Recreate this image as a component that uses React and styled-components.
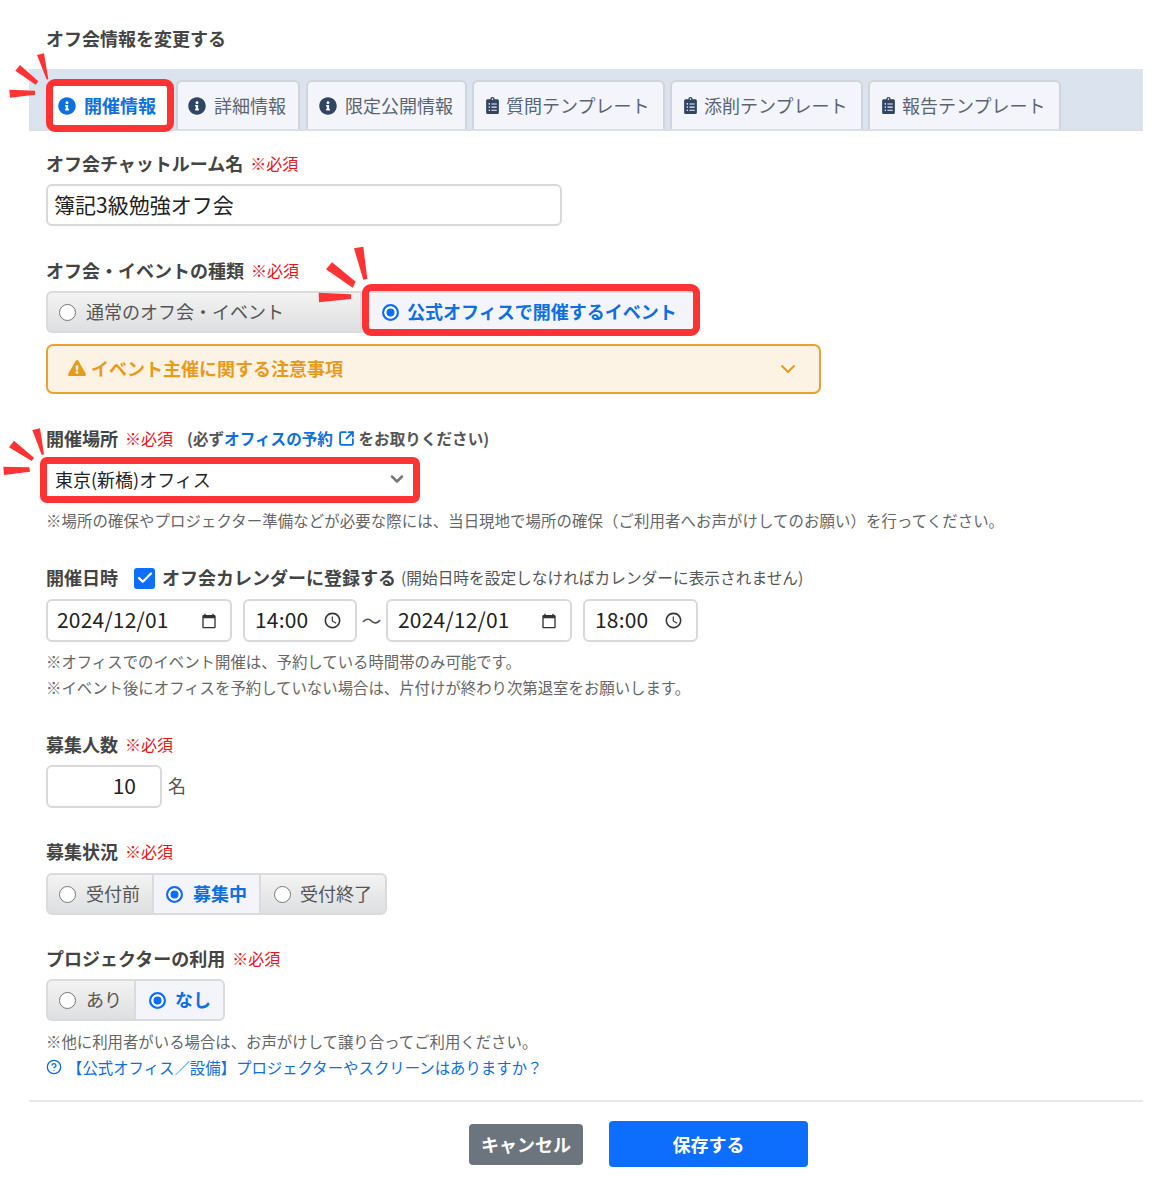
import React from "react";
import styled, { createGlobalStyle } from "styled-components";
import { FaInfoCircle, FaClipboardList, FaExclamationTriangle } from "react-icons/fa";
import { ChevronDown, CircleHelp, SquareArrowOutUpRight, Check } from "lucide-react";
import { MdCalendarToday, MdOutlineAccessTime } from "react-icons/md";

const Global = createGlobalStyle`
  html, body { margin: 0; padding: 0; background: #fff; }
  body { font-family: "Noto Sans CJK JP", "Noto Sans", sans-serif; color: #3a3a3a; }
`;

const Page = styled.div`
  width: 1170px;
  height: 1197px;
  padding: 28px 27px 0 29px;
  box-sizing: border-box;
  overflow: hidden;
`;
const Title = styled.h1`
  margin: 0 0 20px 17px;
  font-size: 18px;
  line-height: 21px;
  font-weight: 700;
  color: #444;
`;
const TabBar = styled.div`
  display: flex;
  align-items: flex-end;
  height: 62px;
  padding-left: 17px;
  background: #dae3ee;
  border-bottom: 2px solid #dcdfe3;
  box-sizing: border-box;
`;
const Tab = styled.div`
  position: relative;
  display: flex;
  align-items: center;
  gap: ${(p) => (p.$list ? "5px" : "8px")};
  width: ${(p) => p.$w}px;
  margin-right: ${(p) => p.$mr}px;
  height: 49px;
  box-sizing: border-box;
  padding: 0 0 2px ${(p) => p.$pl}px;
  background: ${(p) => (p.$active ? "#fff" : "#f3f5fa")};
  border: 2px solid #d0d5dc;
  border-bottom: none;
  border-radius: 6px 6px 0 0;
  font-size: 18px;
  font-weight: ${(p) => (p.$active ? 700 : 400)};
  color: ${(p) => (p.$active ? "#0d6fe0" : "#5a6472")};
  white-space: nowrap;
`;
const TabIcon = styled.span`
  display: flex;
  flex: none;
  margin-top: 2px;
  color: ${(p) => (p.$active ? "#0d6fe0" : "#2f4563")};
`;
const Mark = styled.div`
  position: absolute;
  inset: ${(p) => p.$inset};
  border: 7px solid #ff3333;
  border-radius: ${(p) => p.$r || 9}px;
  pointer-events: none;
  z-index: 2;
`;
const BurstSvg = styled.svg`
  position: absolute;
  left: ${(p) => p.$x}px;
  top: ${(p) => p.$y}px;
  z-index: 3;
  pointer-events: none;
`;
const Form = styled.div`
  padding-left: 17px;
`;
const Field = styled.section`
  position: relative;
  margin-top: ${(p) => p.$mt ?? 34}px;
`;
const Label = styled.div`
  display: flex;
  align-items: center;
  height: 20px;
  box-sizing: border-box;
  padding-bottom: 2px;
  margin-bottom: ${(p) => p.$mb ?? 10}px;
  font-size: 18px;
  font-weight: 700;
  color: #444;
  white-space: nowrap;
`;
const Req = styled.span`
  margin-left: 7px;
  font-size: 16px;
  font-weight: 400;
  color: #e8161b;
`;
const Hint = styled.span`
  margin-left: 14px;
  font-size: 15.6px;
  font-weight: 700;
  color: #555;
  display: inline-flex;
  align-items: center;
`;
const Link = styled.span`
  color: #0d6fe0;
  display: inline-flex;
  align-items: center;
  gap: 5px;
`;
const TextBox = styled.input`
  display: block;
  width: ${(p) => p.$w}px;
  height: ${(p) => p.$h || 42}px;
  box-sizing: border-box;
  padding: 0 ${(p) => p.$pr || 6}px ${(p) => p.$pb || 2}px 6px;
  border: 2px solid #d9d9d9;
  border-radius: 6px;
  background: #fff;
  font: 400 21px "Noto Sans CJK JP", sans-serif;
  color: #222;
  text-align: ${(p) => p.$align || "left"};
  outline: none;
`;
const Seg = styled.div`
  position: relative;
  display: inline-flex;
  height: 42px;
  vertical-align: top;
`;
const SegItem = styled.div`
  position: relative;
  display: flex;
  align-items: center;
  gap: ${(p) => p.$gap || 10}px;
  width: ${(p) => p.$w}px;
  box-sizing: border-box;
  padding: 0 0 2px ${(p) => p.$pl || 11}px;
  border: 2px solid #d9dbdd;
  border-left-width: ${(p) => (p.$first ? 2 : 0)}px;
  border-radius: ${(p) => (p.$first ? "6px 0 0 6px" : p.$last ? "0 6px 6px 0" : "0")};
  background: ${(p) => (p.$on ? "#f3f5fb" : "linear-gradient(#f3f3f3, #dedfe0)")};
  color: ${(p) => (p.$on ? "#0d6fe0" : "#555")};
  font-size: 18px;
  font-weight: ${(p) => (p.$on ? 700 : 400)};
  white-space: nowrap;
`;
const Radio = styled.span`
  flex: none;
  width: 17px;
  height: 17px;
  margin-top: 2px;
  border-radius: 50%;
  box-sizing: border-box;
  background: ${(p) => (p.$on ? "#0d6efd" : "#fff")};
  border: ${(p) => (p.$on ? "2px solid #0d6efd" : "1.5px solid #777")};
  box-shadow: ${(p) => (p.$on ? "inset 0 0 0 2.5px #fff" : "none")};
`;
const Warn = styled.div`
  display: flex;
  align-items: center;
  gap: 5px;
  width: 775px;
  height: 50px;
  margin-top: 11px;
  box-sizing: border-box;
  padding: 0 19px 2px 20px;
  border: 2px solid #eba02f;
  border-radius: 7px;
  background: #fdf3e4;
  color: #e99a1c;
  font-size: 18px;
  font-weight: 700;
`;
const WarnChevron = styled(ChevronDown)`
  margin-left: auto;
  margin-top: 2px;
`;
const SelectWrap = styled.div`
  position: relative;
  display: flex;
  align-items: center;
  width: 367px;
  height: 42px;
  margin-left: 1px;
  box-sizing: border-box;
  padding: 0 7px 2px 8px;
  background: #fff;
  font-size: 18px;
  color: #222;
`;
const SelectChevron = styled(ChevronDown)`
  margin-left: auto;
  color: #777;
`;
const Note = styled.p`
  margin: ${(p) => p.$mt ?? 0}px 0 0;
  font-size: 15.4px;
  line-height: 26px;
  letter-spacing: ${(p) => p.$ls || 0}px;
  color: #666;
  white-space: nowrap;
`;
const NoteLink = styled(Note)`
  color: #0d6fe0;
  display: flex;
  align-items: center;
  gap: 5px;
`;
const CheckBox = styled.span`
  display: inline-flex;
  align-items: center;
  justify-content: center;
  width: 21px;
  height: 21px;
  margin: 2px 7px 0 16px;
  border-radius: 3px;
  background: #0d6efd;
  color: #fff;
`;
const Small = styled.span`
  margin-left: 5px;
  font-size: 15.7px;
  font-weight: 400;
  color: #555;
`;
const DateRow = styled.div`
  display: flex;
  align-items: center;
  height: 43px;
  margin-top: 11px;
`;
const Picker = styled.div`
  display: flex;
  align-items: center;
  justify-content: space-between;
  width: ${(p) => p.$w}px;
  height: 43px;
  margin-right: ${(p) => p.$mr || 0}px;
  box-sizing: border-box;
  padding: 0 13px 4px ${(p) => p.$pl || 10}px;
  border: 2px solid #d9d9d9;
  border-radius: 6px;
  font-size: 21px;
  letter-spacing: 0.2px;
  color: #222;
  svg { color: #333; flex: none; margin-top: 4px; }
`;
const Tilde = styled.span`
  width: 29px;
  text-align: center;
  font-size: 20px;
  color: #555;
`;
const UnitRow = styled.div`
  display: flex;
  align-items: center;
  gap: 6px;
  font-size: 18px;
  line-height: 20px;
  color: #555;
  span { margin-top: -4px; }
`;
const Divider = styled.hr`
  margin: 20px 0 0;
  border: none;
  border-top: 2px solid #e6eaf0;
`;
const Actions = styled.div`
  display: flex;
  align-items: center;
  gap: 26px;
  margin-top: 19px;
  padding-left: 440px;
`;
const Cancel = styled.button`
  width: 114px;
  height: 41px;
  padding: 0;
  border: none;
  border-radius: 4px;
  background: #6c757d;
  color: #fff;
  font: 700 18px "Noto Sans CJK JP", sans-serif;
`;
const Save = styled.button`
  width: 199px;
  height: 46px;
  padding: 0;
  border: none;
  border-radius: 4px;
  background: #0d6efd;
  color: #fff;
  font: 700 18px "Noto Sans CJK JP", sans-serif;
`;

const Burst = ({ x, y, w = 50, h = 50, points }) => (
  <BurstSvg $x={x} $y={y} width={w} height={h} viewBox={`0 0 ${w} ${h}`}>
    {points.map((pt) => (
      <polygon key={pt} points={pt} fill="#ff3333" />
    ))}
  </BurstSvg>
);

const tabs = [
  { t: "開催情報", w: 128, mr: 2, pl: 10, active: true },
  { t: "詳細情報", w: 124, mr: 6, pl: 10 },
  { t: "限定公開情報", w: 161, mr: 5, pl: 11 },
  { t: "質問テンプレート", w: 193, mr: 5, pl: 10, list: true },
  { t: "添削テンプレート", w: 193, mr: 5, pl: 10, list: true },
  { t: "報告テンプレート", w: 193, mr: 0, pl: 10, list: true },
];

const Required = () => <Req>※必須</Req>;

export default function App() {
  return (
    <Page>
      <Global />
      <Title>オフ会情報を変更する</Title>
      <TabBar>
        {tabs.map((tab) => (
          <Tab key={tab.t} $w={tab.w} $mr={tab.mr} $pl={tab.pl} $active={tab.active} $list={tab.list}>
            <TabIcon $active={tab.active}>
              {tab.list ? <FaClipboardList size={17} /> : <FaInfoCircle size={18} />}
            </TabIcon>
            {tab.t}
            {tab.active && <Mark $inset="-3px -2px -3px -2px" />}
            {tab.active && (
              <Burst
                x={-48}
                y={-33}
                points={[
                  "37,6 44,4.3 48.3,30 46.7,30.7",
                  "15.3,21.7 20,16 38.3,32.3 35.7,35.7",
                  "9.3,40.7 35,41.7 35,45.7 10,48.7",
                ]}
              />
            )}
          </Tab>
        ))}
      </TabBar>
      <Form>
        <Field $mt={23}>
          <Label>
            オフ会チャットルーム名
            <Required />
          </Label>
          <TextBox readOnly value="簿記3級勉強オフ会" $w={516} />
        </Field>
        <Field $mt={35}>
          <Label>
            オフ会・イベントの種類
            <Required />
          </Label>
          <Seg>
            <SegItem $first $w={316}>
              <Radio />
              通常のオフ会・イベント
            </SegItem>
            <SegItem $on $last $w={336} $pl={20} $gap={8}>
              <Radio $on />
              公式オフィスで開催するイベント
              <Mark $inset="-9px -4px -5px 0" />
              <Burst
                x={-52}
                y={-48}
                w={60}
                h={60}
                points={[
                  "44,3.3 53.3,1.7 57.3,34 53.3,34.7",
                  "16,24.3 22,17.3 45.7,36.7 42.7,42.7",
                  "8.7,47.7 41,49.3 41,54 9,57.3",
                ]}
              />
            </SegItem>
          </Seg>
          <Warn>
            <FaExclamationTriangle size={18} />
            イベント主催に関する注意事項
            <WarnChevron size={24} strokeWidth={2} />
          </Warn>
        </Field>
        <Field $mt={35}>
          <Label>
            開催場所
            <Required />
            <Hint>
              (必ず
              <Link>
                オフィスの予約
                <SquareArrowOutUpRight size={17} strokeWidth={2.6} />
              </Link>
              &nbsp;をお取りください)
            </Hint>
          </Label>
          <SelectWrap>
            東京(新橋)オフィス
            <SelectChevron size={20} strokeWidth={3} />
            <Mark $inset="-2px -6px -2px -7px" $r={7} />
          </SelectWrap>
          <Burst
            x={-46}
            y={-4}
            points={[
              "32.3,5 40,3.3 44,29.3 41.7,30",
              "9,22.3 14,15.7 34,32.7 31.7,36",
              "3.3,41.7 29.3,42.3 30,46.7 4,50",
            ]}
          />
          <Note $mt={6} $ls={0.1}>
            ※場所の確保やプロジェクター準備などが必要な際には、当日現地で場所の確保（ご利用者へお声がけしてのお願い）を行ってください。
          </Note>
        </Field>
        <Field $mt={35}>
          <Label $mb={0}>
            開催日時
            <CheckBox>
              <Check size={18} strokeWidth={3} />
            </CheckBox>
            オフ会カレンダーに登録する
            <Small>(開始日時を設定しなければカレンダーに表示されません)</Small>
          </Label>
          <DateRow>
            <Picker $w={186} $mr={11} $pl={9}>
              2024/12/01
              <MdCalendarToday size={16} />
            </Picker>
            <Picker $w={114}>
              14:00
              <MdOutlineAccessTime size={19} />
            </Picker>
            <Tilde>〜</Tilde>
            <Picker $w={186} $mr={11}>
              2024/12/01
              <MdCalendarToday size={16} />
            </Picker>
            <Picker $w={115}>
              18:00
              <MdOutlineAccessTime size={19} />
            </Picker>
          </DateRow>
          <Note $mt={6}>※オフィスでのイベント開催は、予約している時間帯のみ可能です。</Note>
          <Note>※イベント後にオフィスを予約していない場合は、片付けが終わり次第退室をお願いします。</Note>
        </Field>
        <Field $mt={35}>
          <Label>
            募集人数
            <Required />
          </Label>
          <UnitRow>
            <TextBox readOnly value="10" $w={116} $h={43} $align="right" $pr={24} $pb={4} />
            <span>名</span>
          </UnitRow>
        </Field>
        <Field>
          <Label $mb={11}>
            募集状況
            <Required />
          </Label>
          <Seg>
            <SegItem $first $w={108}>
              <Radio />
              受付前
            </SegItem>
            <SegItem $on $w={107} $pl={12}>
              <Radio $on />
              募集中
            </SegItem>
            <SegItem $last $w={126} $pl={13} $gap={9}>
              <Radio />
              受付終了
            </SegItem>
          </Seg>
        </Field>
        <Field>
          <Label>
            プロジェクターの利用
            <Required />
          </Label>
          <Seg>
            <SegItem $first $w={90} $gap={10}>
              <Radio />
              あり
            </SegItem>
            <SegItem $on $last $w={89} $pl={13} $gap={9}>
              <Radio $on />
              なし
            </SegItem>
          </Seg>
          <Note $mt={7}>※他に利用者がいる場合は、お声がけして譲り合ってご利用ください。</Note>
          <NoteLink>
            <CircleHelp size={16} />
            【公式オフィス／設備】プロジェクターやスクリーンはありますか？
          </NoteLink>
        </Field>
      </Form>
      <Divider />
      <Actions>
        <Cancel>キャンセル</Cancel>
        <Save>保存する</Save>
      </Actions>
    </Page>
  );
}
